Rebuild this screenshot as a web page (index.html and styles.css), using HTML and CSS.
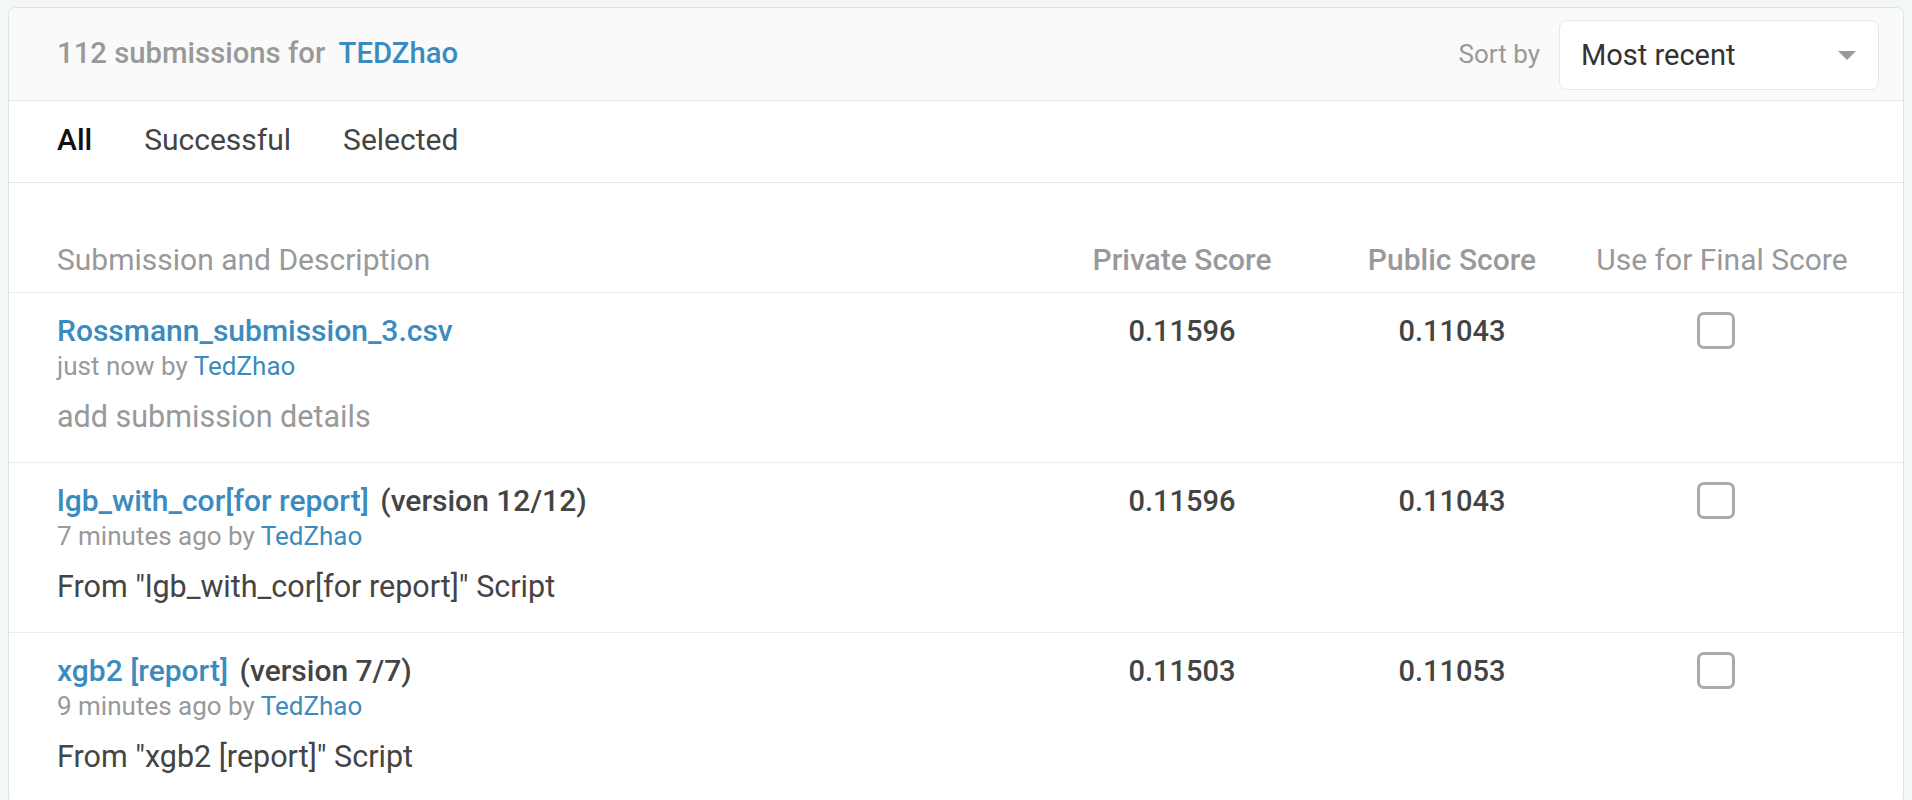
FILE: index.html
```html
<!DOCTYPE html>
<html lang="en">
<head>
<meta charset="utf-8">
<title>Submissions</title>
<link rel="stylesheet" href="styles.css">
</head>
<body>
<div class="page">
  <section class="card">
    <header class="card-header">
      <h2 class="count">112 submissions for <a class="user-link" href="#">TEDZhao</a></h2>
      <div class="sort">
        <span class="sort-label">Sort by</span>
        <div class="select">
          <span class="select-value">Most recent</span>
          <span class="select-arrow"></span>
        </div>
      </div>
    </header>
    <nav class="tabs">
      <a class="tab tab-active" href="#">All</a>
      <a class="tab" href="#">Successful</a>
      <a class="tab" href="#">Selected</a>
    </nav>
    <div class="table">
      <div class="table-head">
        <div class="th th-desc">Submission and Description</div>
        <div class="th th-score">Private Score</div>
        <div class="th th-score">Public Score</div>
        <div class="th th-final">Use for Final Score</div>
      </div>

      <div class="row">
        <div class="cell-desc">
          <div class="title"><a class="title-link" href="#">Rossmann_submission_3.csv</a></div>
          <div class="meta">just now by <a class="meta-link" href="#">TedZhao</a></div>
          <div class="desc desc-muted">add submission details</div>
        </div>
        <div class="score">0.11596</div>
        <div class="score">0.11043</div>
        <div class="final"><span class="checkbox"></span></div>
      </div>

      <div class="row">
        <div class="cell-desc">
          <div class="title"><a class="title-link" href="#">lgb_with_cor[for report]</a> <span class="version">(version 12/12)</span></div>
          <div class="meta">7 minutes ago by <a class="meta-link" href="#">TedZhao</a></div>
          <div class="desc">From "lgb_with_cor[for report]" Script</div>
        </div>
        <div class="score">0.11596</div>
        <div class="score">0.11043</div>
        <div class="final"><span class="checkbox"></span></div>
      </div>

      <div class="row">
        <div class="cell-desc">
          <div class="title"><a class="title-link" href="#">xgb2 [report]</a> <span class="version">(version 7/7)</span></div>
          <div class="meta">9 minutes ago by <a class="meta-link" href="#">TedZhao</a></div>
          <div class="desc">From "xgb2 [report]" Script</div>
        </div>
        <div class="score">0.11503</div>
        <div class="score">0.11053</div>
        <div class="final"><span class="checkbox"></span></div>
      </div>
    </div>
  </section>
</div>
</body>
</html>
```
FILE: styles.css
```css
* { box-sizing: border-box; }

html, body {
  margin: 0;
  padding: 0;
  background: #f4f7f8;
  font-family: Roboto, "Liberation Sans", Arial, sans-serif;
  color: #444;
}

a { text-decoration: none; }

.page {
  padding: 7px 8px 0 8px;
}

.card {
  background: #fff;
  border: 1px solid #dde2e5;
  border-radius: 8px;
  overflow: hidden;
}

.card-header {
  height: 93px;
  display: flex;
  align-items: center;
  justify-content: space-between;
  padding: 0 24px 0 48px;
  background: #fafafa;
  border-bottom: 1px solid #e6e6e6;
}

.count {
  margin: 0 0 2px 0;
  font-size: 29.3px;
  font-weight: 500;
  color: #999;
}

.user-link {
  color: #3b8bbe;
  margin-left: 6px;
}

.sort {
  display: flex;
  align-items: center;
  gap: 19px;
}

.sort-label {
  font-size: 26px;
  color: #999;
}

.select {
  width: 320px;
  height: 70px;
  background: #fff;
  border: 1px solid #e6e6e6;
  border-radius: 8px;
  display: flex;
  align-items: center;
  justify-content: space-between;
  padding: 0 22px 0 21px;
  margin-top: 1px;
}

.select-value {
  font-size: 29px;
  color: #333;
}

.select-arrow {
  width: 0;
  height: 0;
  border-left: 9px solid transparent;
  border-right: 9px solid transparent;
  border-top: 9px solid #999;
  margin-top: 2px;
}

.tabs {
  height: 82px;
  display: flex;
  align-items: center;
  gap: 52px;
  padding: 0 0 5px 48px;
  border-bottom: 1px solid #e6e6e6;
}

.tab {
  font-size: 30px;
  color: #444;
}

.tab-active {
  color: #111;
  font-weight: 500;
}

.table-head,
.row {
  display: grid;
  grid-template-columns: 1fr 270px 270px 270px;
  padding: 0 46px 0 48px;
  border-bottom: 1px solid #ececec;
}

.table-head {
  height: 110px;
  align-items: end;
  padding-bottom: 14px;
}

.th {
  font-size: 30px;
  line-height: 36px;
  color: #999;
}

.th-score {
  text-align: center;
  font-weight: 500;
}

.th-final {
  text-align: center;
}

.row {
  height: 170px;
  align-items: start;
  padding-top: 20px;
}

.title {
  font-size: 30px;
  line-height: 36px;
  font-weight: 500;
}

.title-link {
  color: #3b8bbe;
}

.version {
  color: #444;
  margin-left: 4px;
}

.meta {
  font-size: 26px;
  line-height: 32px;
  margin-top: 1px;
  color: #999;
}

.meta-link {
  color: #3b8bbe;
}

.desc {
  font-size: 30.5px;
  line-height: 36px;
  margin-top: 17px;
  color: #444;
}

.desc-muted {
  color: #999;
}

.score {
  font-size: 29px;
  line-height: 36px;
  font-weight: 500;
  text-align: center;
  color: #444;
}

.final {
  display: flex;
  justify-content: center;
  padding-right: 12px;
}

.checkbox {
  display: block;
  width: 38px;
  height: 37px;
  border: 3px solid #aaa;
  border-radius: 7px;
  margin-top: -1px;
}
```
